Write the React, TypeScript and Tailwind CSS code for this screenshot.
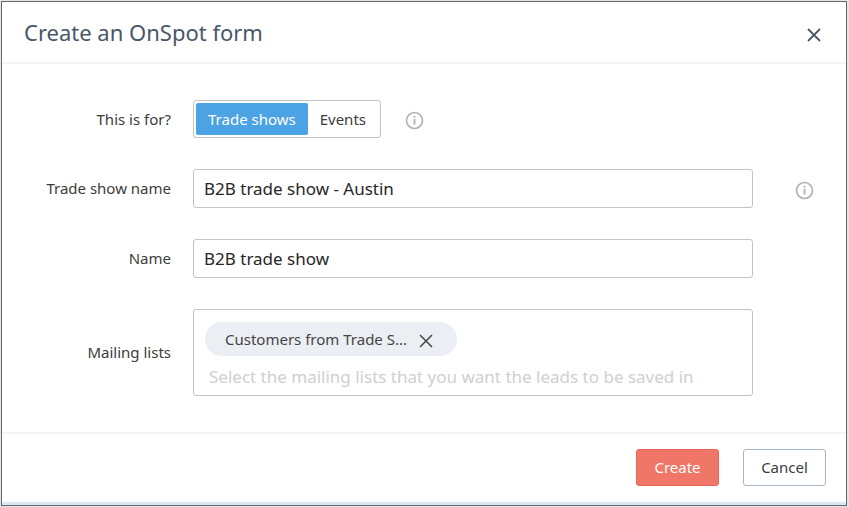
import { useState } from "react";

function InfoIcon() {
  return (
    <svg width="19" height="19" viewBox="0 0 19 19" fill="none" aria-hidden="true">
      <circle cx="9.5" cy="9.5" r="8" stroke="#b0b0b0" strokeWidth="1.6" />
      <rect x="8.6" y="4.8" width="1.8" height="1.8" fill="#b0b0b0" />
      <rect x="8.6" y="8" width="1.8" height="5.6" fill="#b0b0b0" />
    </svg>
  );
}

function CrossIcon({ width }: { width: number }) {
  return (
    <svg width="14" height="14" viewBox="0 0 14 14" fill="none" aria-hidden="true">
      <path d="M1 1L13 13M13 1L1 13" stroke="currentColor" strokeWidth={width} />
    </svg>
  );
}

function InfoButton({ label }: { label: string }) {
  return (
    <button type="button" aria-label={label} className="block shrink-0 pt-[3px]">
      <InfoIcon />
    </button>
  );
}

const labelClass = "text-right text-[15px] text-[#3c3c3c]";
const fieldClass =
  "h-[39px] w-full min-w-0 rounded-[3px] border border-[#c4c4c4] bg-white px-[10px] text-[17px] text-[#262626] outline-none";
const segmentClass = "flex h-8 items-center rounded-[2px] px-3 text-[15px]";

export default function App() {
  const [kind, setKind] = useState("trade");
  const [showName, setShowName] = useState("B2B trade show - Austin");
  const [name, setName] = useState("B2B trade show");
  const [lists, setLists] = useState(["Customers from Trade S..."]);

  return (
    <div className="min-h-screen bg-[#e4e6e4] p-px pr-0.5 font-['Noto_Sans','Open_Sans',sans-serif]">
      <form
        onSubmit={(e) => e.preventDefault()}
        className="border border-[#62676c] bg-white"
      >
        <header className="flex h-[62px] items-center justify-between border-b-2 border-[#f4f4f5] pr-[25px] pl-[22px] text-[#4a5768]">
          <h1 className="text-[22px] leading-8">Create an OnSpot form</h1>
          <button type="button" aria-label="Close" className="pt-1.5">
            <CrossIcon width={1.8} />
          </button>
        </header>

        <div className="grid grid-cols-[169px_minmax(0,1fr)_61px] items-center gap-y-[31px] pt-9 pr-8 pb-9">
          <span id="kind-label" className={labelClass}>
            This is for?
          </span>
          <div className="flex items-center gap-6 pl-[22px]">
            <div
              role="group"
              aria-labelledby="kind-label"
              className="flex h-[38px] items-center rounded-[3px] border border-[#c4c4c4] px-0.5"
            >
              <button
                type="button"
                aria-pressed={kind === "trade"}
                onClick={() => setKind("trade")}
                className={`${segmentClass} ${kind === "trade" ? "bg-[#4ba3e3] text-white" : "text-[#3c3c3c]"}`}
              >
                Trade shows
              </button>
              <button
                type="button"
                aria-pressed={kind === "events"}
                onClick={() => setKind("events")}
                className={`${segmentClass} ${kind === "events" ? "bg-[#4ba3e3] text-white" : "text-[#3c3c3c]"}`}
              >
                Events
              </button>
            </div>
            <InfoButton label="About the form type" />
          </div>
          <span />

          <label htmlFor="show-name" className={labelClass}>
            Trade show name
          </label>
          <div className="pl-[22px]">
            <input
              id="show-name"
              value={showName}
              onChange={(e) => setShowName(e.target.value)}
              className={fieldClass}
            />
          </div>
          <div className="flex justify-end">
            <InfoButton label="About the trade show name" />
          </div>

          <label htmlFor="form-name" className={labelClass}>
            Name
          </label>
          <div className="pl-[22px]">
            <input
              id="form-name"
              value={name}
              onChange={(e) => setName(e.target.value)}
              className={fieldClass}
            />
          </div>
          <span />

          <label htmlFor="lists" className={labelClass}>
            Mailing lists
          </label>
          <div className="pl-[22px]">
            <div className="flex flex-col items-start gap-1.5 rounded-[3px] border border-[#c4c4c4] px-[11px] pt-3 pb-[5px]">
              {lists.map((item) => (
                <span
                  key={item}
                  className="flex h-[34px] items-center gap-3 rounded-full bg-[#ebeff4] pr-6 pl-5 text-[15px] text-[#444444]"
                >
                  {item}
                  <button
                    type="button"
                    aria-label={`Remove ${item}`}
                    onClick={() => setLists(lists.filter((l) => l !== item))}
                    className="pt-1"
                  >
                    <CrossIcon width={1.5} />
                  </button>
                </span>
              ))}
              <input
                id="lists"
                placeholder="Select the mailing lists that you want the leads to be saved in"
                className="h-7 w-full px-1 text-[17px] text-[#262626] outline-none placeholder:text-[#cfcfcf]"
              />
            </div>
          </div>
          <span />
        </div>

        <footer className="flex justify-end gap-6 border-t-2 border-[#f4f4f5] pt-[15px] pr-5 pb-4">
          <button
            type="submit"
            className="h-[37px] w-[83px] rounded-[3px] border border-[#e96557] bg-[#f07667] text-[15px] text-white"
          >
            Create
          </button>
          <button
            type="button"
            className="h-[37px] w-[83px] rounded-[3px] border border-[#a9b4c6] bg-white text-[15px] text-[#3c3c3c]"
          >
            Cancel
          </button>
        </footer>
        <div className="h-[3px] bg-[#dfe6ee]" />
      </form>
    </div>
  );
}
